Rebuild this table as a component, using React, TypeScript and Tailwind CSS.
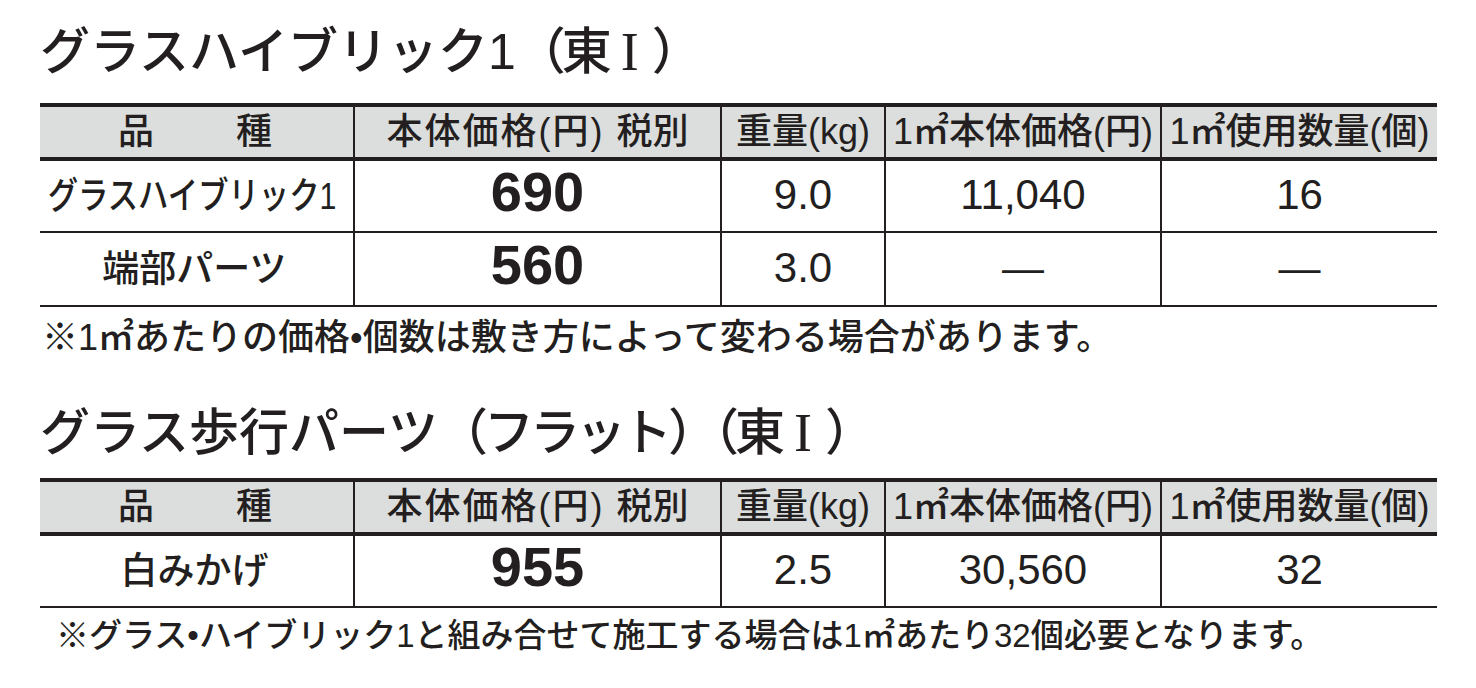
import React from "react";

const FONT = "font-['Liberation_Sans','Noto_Sans_CJK_JP',sans-serif]";

type Row = {
  name: React.ReactNode;
  price: string;
  weight: string;
  m2price: string;
  m2count: string;
  h: string;
};

const COLS = "grid grid-cols-[313px_367px_164px_276px_277px]";

function Header() {
  return (
    <div className={`${COLS} h-[54px] bg-[#dcdddd] border-b-4 border-[#231f20] text-[36px] leading-none`}>
      <div className="flex items-center justify-center gap-[82px] pr-[3px]">
        <span>品</span>
        <span>種</span>
      </div>
      <div className="flex items-center justify-center border-l-2 border-[#231f20] whitespace-nowrap">
        <span className="tracking-[2px]">本体価格(円)</span>
        <span className="ml-[12px]">税別</span>
      </div>
      <div className="flex items-center justify-center border-l-2 border-[#231f20] whitespace-nowrap">
        重量(kg)
      </div>
      <div className="flex items-center justify-center border-l-2 border-[#231f20] whitespace-nowrap">
        1㎡本体価格(円)
      </div>
      <div className="flex items-center justify-center border-l-2 border-[#231f20] whitespace-nowrap">
        1㎡使用数量(個)
      </div>
    </div>
  );
}

function BodyRow({ r }: { r: Row }) {
  return (
    <div className={`${COLS} ${r.h} border-b-2 border-[#231f20] leading-none`}>
      <div className="flex items-center justify-center text-[37px] whitespace-nowrap">{r.name}</div>
      <div className="flex items-center justify-center border-l-2 border-[#231f20] text-[56px] font-bold pb-[8px]">
        {r.price}
      </div>
      <div className="flex items-center justify-center border-l-2 border-[#231f20] text-[42px] pb-[2px]">
        {r.weight}
      </div>
      <div className="flex items-center justify-center border-l-2 border-[#231f20] text-[42px] pb-[2px]">
        {r.m2price}
      </div>
      <div className="flex items-center justify-center border-l-2 border-[#231f20] text-[42px] pb-[2px]">
        {r.m2count}
      </div>
    </div>
  );
}

function Table({ rows }: { rows: Row[] }) {
  return (
    <div className="ml-[40px] w-[1397px] border-t-4 border-[#231f20]">
      <Header />
      {rows.map((r, i) => (
        <BodyRow key={i} r={r} />
      ))}
    </div>
  );
}

function Higashi() {
  return (
    <span className="tracking-[-4px]">
      （東
      <span className="inline-block mx-[13px] tracking-normal font-normal text-[54px] font-['Liberation_Serif',serif] align-[-1px]">
        I
      </span>
      ）
    </span>
  );
}

export default function App() {
  const rows1: Row[] = [
    {
      name: (
        <span className="inline-block scale-x-[0.82] mr-[8px]">グラスハイブリック1</span>
      ),
      price: "690",
      weight: "9.0",
      m2price: "11,040",
      m2count: "16",
      h: "h-[72px]",
    },
    {
      name: <span className="pr-[4px]">端部パーツ</span>,
      price: "560",
      weight: "3.0",
      m2price: "—",
      m2count: "—",
      h: "h-[74px]",
    },
  ];
  const rows2: Row[] = [
    {
      name: <span className="pr-[4px]">白みかげ</span>,
      price: "955",
      weight: "2.5",
      m2price: "30,560",
      m2count: "32",
      h: "h-[72px]",
    },
  ];

  return (
    <div className={`w-[1476px] h-[688px] bg-white text-[#231f20] font-medium overflow-hidden ${FONT}`}>
      <div className="pt-[27px]">
        <h1 className="ml-[40px] h-[50px] text-[50px] leading-[50px] font-medium whitespace-nowrap">
          グラスハイブリック1<Higashi />
        </h1>
        <div className="mt-[26px]">
          <Table rows={rows1} />
        </div>
        <p className="ml-[42px] mt-[13px] h-[36px] text-[36px] leading-[36px] whitespace-nowrap">
          ※1㎡あたりの価格•個数は敷き方によって変わる場合があります。
        </p>
        <h1 className="ml-[40px] mt-[52px] h-[50px] text-[50px] leading-[50px] font-medium whitespace-nowrap">
          グラス歩行パーツ<span className="tracking-[-4px]">（フラット）</span>
          <Higashi />
        </h1>
        <div className="mt-[20px]">
          <Table rows={rows2} />
        </div>
        <p className="ml-[56px] mt-[11px] h-[33px] text-[33px] leading-[33px] whitespace-nowrap">
          ※グラス•ハイブリック1と組み合せて施工する場合は1㎡あたり32個必要となります。
        </p>
      </div>
    </div>
  );
}
